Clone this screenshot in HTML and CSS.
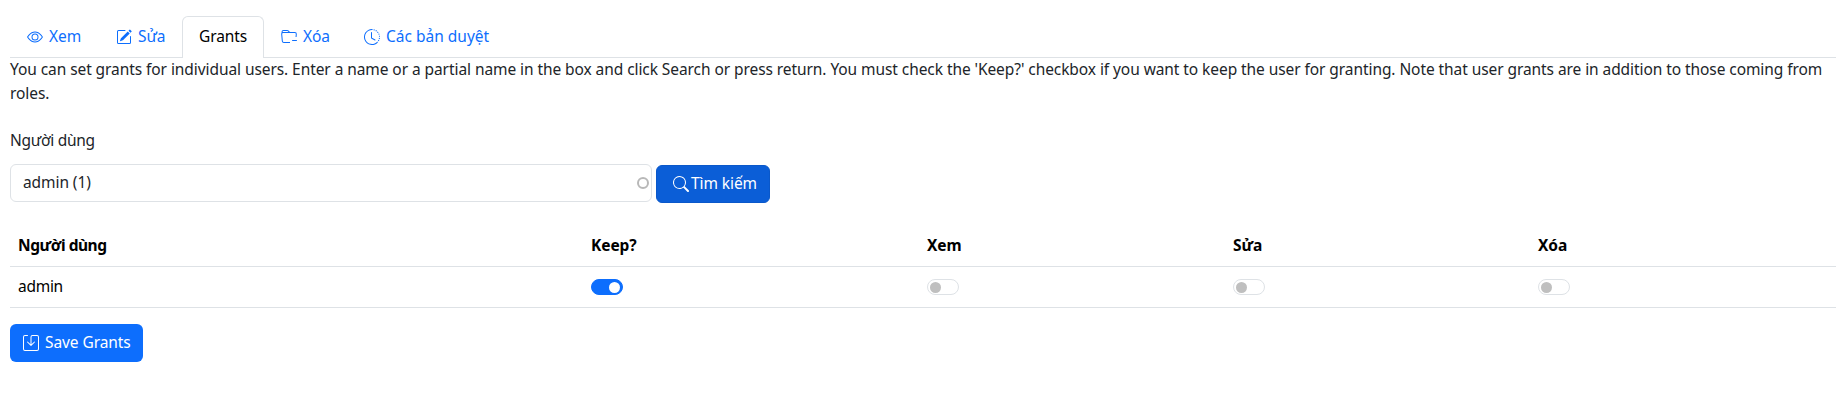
FILE: index.html
```html
<!DOCTYPE html>
<html lang="vi">
<head>
<meta charset="utf-8">
<title>Grants</title>
<link rel="stylesheet" href="styles.css">
</head>
<body>
<nav class="tabs">
  <a class="tab tab-view"><svg class="icon" viewBox="0 0 16 16"><path d="M16 8s-3-5.5-8-5.5S0 8 0 8s3 5.5 8 5.5S16 8 16 8M1.173 8a13 13 0 0 1 1.66-2.043C4.12 4.668 5.88 3.5 8 3.5s3.879 1.168 5.168 2.457A13 13 0 0 1 14.828 8q-.086.13-.195.288c-.335.48-.83 1.12-1.465 1.755C11.879 11.332 10.119 12.5 8 12.5s-3.879-1.168-5.168-2.457A13 13 0 0 1 1.172 8z"/><path d="M8 5.5a2.5 2.5 0 1 0 0 5 2.5 2.5 0 0 0 0-5M4.5 8a3.5 3.5 0 1 1 7 0 3.5 3.5 0 0 1-7 0"/></svg><span>Xem</span></a>
  <a class="tab tab-edit"><svg class="icon" viewBox="0 0 16 16"><path d="M15.502 1.94a.5.5 0 0 1 0 .706L14.459 3.69l-2-2L13.502.646a.5.5 0 0 1 .707 0l1.293 1.293zm-1.75 2.456-2-2L4.939 9.21a.5.5 0 0 0-.121.196l-.805 2.414a.25.25 0 0 0 .316.316l2.414-.805a.5.5 0 0 0 .196-.12l6.813-6.814z"/><path fill-rule="evenodd" d="M1 13.5A1.5 1.5 0 0 0 2.5 15h11a1.5 1.5 0 0 0 1.5-1.5v-6a.5.5 0 0 0-1 0v6a.5.5 0 0 1-.5.5h-11a.5.5 0 0 1-.5-.5v-11a.5.5 0 0 1 .5-.5H9a.5.5 0 0 0 0-1H2.5A1.5 1.5 0 0 0 1 2.5z"/></svg><span>Sửa</span></a>
  <a class="tab tab-grants active"><span>Grants</span></a>
  <a class="tab tab-delete"><svg class="icon" viewBox="0 0 16 16"><path d="m.5 3 .04.87a2 2 0 0 0-.342 1.311l.637 7A2 2 0 0 0 2.826 14H9v-1H2.826a1 1 0 0 1-.995-.91l-.637-7A1 1 0 0 1 2.19 4h11.62a1 1 0 0 1 .996 1.09L14.54 8h1.005l.256-2.819A2 2 0 0 0 13.81 3H9.828a2 2 0 0 1-1.414-.586l-.828-.828A2 2 0 0 0 6.172 1H2.5a2 2 0 0 0-2 2m5.672-1a1 1 0 0 1 .707.293L7.586 3H2.19q-.362.002-.683.12L1.5 2.98a1 1 0 0 1 1-.98z"/><path d="M11 11.5a.5.5 0 0 1 .5-.5h4a.5.5 0 1 1 0 1h-4a.5.5 0 0 1-.5-.5"/></svg><span>Xóa</span></a>
  <a class="tab tab-revisions"><svg class="icon" viewBox="0 0 16 16"><path d="M8.515 1.019A7 7 0 0 0 8 1V0a8 8 0 0 1 .589.022zm2.004.45a7 7 0 0 0-.985-.299l.219-.976q.576.129 1.126.342zm1.37.71a7 7 0 0 0-.439-.27l.493-.87a8 8 0 0 1 .979.654l-.615.789a7 7 0 0 0-.418-.302zm1.834 1.79a7 7 0 0 0-.653-.796l.724-.69q.406.429.747.91zm.744 1.352a7 7 0 0 0-.214-.468l.893-.45a8 8 0 0 1 .45 1.088l-.95.313a7 7 0 0 0-.179-.483m.53 2.507a7 7 0 0 0-.1-1.025l.985-.17q.1.58.116 1.17zm-.131 1.538q.05-.254.081-.51l.993.123a8 8 0 0 1-.23 1.155l-.964-.267q.069-.247.12-.501m-.952 2.379q.276-.436.486-.908l.914.405q-.24.54-.555 1.038zm-.964 1.205q.183-.183.35-.378l.758.653a8 8 0 0 1-.401.432z"/><path d="M8 1a7 7 0 1 0 4.95 11.95l.707.707A8.001 8.001 0 1 1 8 0z"/><path d="M7.5 3a.5.5 0 0 1 .5.5v5.21l3.248 1.856a.5.5 0 0 1-.496.868l-3.5-2A.5.5 0 0 1 7 9V3.5a.5.5 0 0 1 .5-.5"/></svg><span>Các bản duyệt</span></a>
</nav>
<p class="help"><span class="help-first">You can set grants for individual users. Enter a name or a partial name in the box and click Search or press return. You must check the 'Keep?' checkbox if you want to keep the user for granting. Note that user grants are in addition to those coming from</span> roles.</p>
<div class="label">Người dùng</div>
<div class="search">
  <div class="field"><span>admin (1)</span><i class="throbber"></i></div>
  <button class="btn btn-search"><svg class="icon" viewBox="0 0 16 16"><path d="M11.742 10.344a6.5 6.5 0 1 0-1.397 1.398h-.001q.044.06.098.115l3.85 3.85a1 1 0 0 0 1.415-1.414l-3.85-3.85a1 1 0 0 0-.115-.1zM12 6.5a5.5 5.5 0 1 1-11 0 5.5 5.5 0 0 1 11 0"/></svg><span>Tìm kiếm</span></button>
</div>
<table class="grants">
  <colgroup><col class="c-user"><col class="c-keep"><col class="c-view"><col class="c-edit"><col></colgroup>
  <thead><tr><th class="user">Người dùng</th><th>Keep?</th><th>Xem</th><th>Sửa</th><th>Xóa</th></tr></thead>
  <tbody><tr><td class="name">admin</td><td><i class="switch on"></i></td><td><i class="switch"></i></td><td><i class="switch"></i></td><td><i class="switch"></i></td></tr></tbody>
</table>
<button class="btn btn-save"><svg class="icon" viewBox="0 0 16 16"><path d="M2 1a1 1 0 0 0-1 1v12a1 1 0 0 0 1 1h12a1 1 0 0 0 1-1V2a1 1 0 0 0-1-1H9.5a1 1 0 0 0-1 1v7.293l2.646-2.647a.5.5 0 0 1 .708.708l-3.5 3.5a.5.5 0 0 1-.708 0l-3.5-3.5a.5.5 0 1 1 .708-.708L7.5 9.293V2a2 2 0 0 1 2-2H14a2 2 0 0 1 2 2v12a2 2 0 0 1-2 2H2a2 2 0 0 1-2-2V2a2 2 0 0 1 2-2h2.5a.5.5 0 0 1 0 1z"/></svg><span>Save Grants</span></button>
</body>
</html>
```
FILE: styles.css
```css
* { box-sizing: border-box; }
body {
  margin: 0;
  padding: 16px 8px 0 10px;
  background: #fff;
  color: #212529;
  font: 15.5px/24px "Noto Sans", "Open Sans", sans-serif;
  letter-spacing: -0.08px;
}
.icon { width: 16px; height: 16px; fill: currentColor; flex: none; }
.tabs { display: flex; height: 42px; border-bottom: 1px solid #dee2e6; }
.tab {
  display: flex;
  align-items: center;
  gap: 6px;
  height: 42px;
  padding: 0 0 1px 17px;
  color: #0d6efd;
  white-space: nowrap;
}
.tab span, .field span, .btn span { padding-bottom: 2px; }
.tab-view { width: 89px; }
.tab-edit { width: 83px; }
.tab-grants { width: 82px; padding-left: 16px; }
.tab-delete { width: 83px; }
.tab-revisions { width: 160px; letter-spacing: 0; }
.active {
  color: #000;
  background: #fff;
  border: 1px solid #dee2e6;
  border-bottom: 0;
  border-radius: 6px 6px 0 0;
}
.help { margin: -1px 0 23px; letter-spacing: -0.075px; }
.help-first { display: block; white-space: nowrap; }
.label { margin-bottom: 12px; letter-spacing: -0.28px; }
.search { display: flex; gap: 4px; }
.field {
  display: flex;
  align-items: center;
  justify-content: space-between;
  width: 642px;
  height: 38px;
  padding: 0 2px 0 12px;
  border: 1px solid #dee2e6;
  border-radius: 6px;
}
.throbber { width: 12px; height: 12px; margin-bottom: 1px; border: 2px solid #b8b8b8; border-radius: 50%; }
.btn {
  display: flex;
  align-items: center;
  height: 38px;
  padding: 0 0 0 13px;
  border: 0;
  border-radius: 6px;
  background: #0d6efd;
  color: #fff;
  font: inherit;
  letter-spacing: inherit;
  white-space: nowrap;
}
.btn-search {
  width: 114px;
  margin-top: 1px;
  padding-left: 16px;
  gap: 2px;
  background: #0b5ed7;
  border: 1px solid #0a58ca;
}
.btn-save { width: 133px; gap: 6px; }
.grants {
  width: 100%;
  margin: 22px 0 16px;
  border-collapse: separate;
  border-spacing: 0;
  table-layout: fixed;
  color: #000;
}
.grants th, .grants td {
  height: 41px;
  padding: 8px;
  border-bottom: 1px solid #dee2e6;
  text-align: left;
}
.grants th { height: 42px; padding-bottom: 9px; }
.grants .user { letter-spacing: -0.45px; }
.grants .name { padding: 7px 8px 9px; letter-spacing: -0.28px; }
.c-user { width: 573px; }
.c-keep { width: 336px; }
.c-view { width: 306px; }
.c-edit { width: 305px; }
.switch {
  display: flex;
  align-items: center;
  width: 32px;
  height: 16px;
  padding: 0 2px;
  border: 1px solid #dee2e6;
  border-radius: 8px;
}
.switch::before { content: ""; width: 11px; height: 11px; border-radius: 50%; background: #bfbfbf; }
.on { justify-content: flex-end; background: #0d6efd; border-color: #0d6efd; }
.on::before { background: #fff; }
```
